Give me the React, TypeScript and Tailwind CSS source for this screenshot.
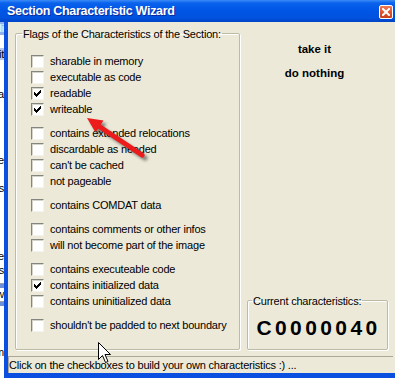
import React from "react";

const groups: { label: string; checked?: boolean }[][] = [
  [
    { label: "sharable in memory" },
    { label: "executable as code" },
    { label: "readable", checked: true },
    { label: "writeable", checked: true },
  ],
  [
    { label: "contains extended relocations" },
    { label: "discardable as needed" },
    { label: "can't be cached" },
    { label: "not pageable" },
  ],
  [{ label: "contains COMDAT data" }],
  [
    { label: "contains comments or other infos" },
    { label: "will not become part of the image" },
  ],
  [
    { label: "contains executeable code" },
    { label: "contains initialized data", checked: true },
    { label: "contains uninitialized data" },
  ],
  [{ label: "shouldn't be padded to next boundary" }],
];

// bits of the window behind the dialog, only the tails show
const behind = [
  { text: "li", cls: "bg-[#8fb0e8] text-white h-[13px]" },
  { text: "", cls: "bg-white h-[13px]" },
  { text: "it", cls: "bg-[#b8c8e8] h-[12px]" },
  { text: "", cls: "bg-white h-[28px]" },
  { text: "a", cls: "bg-white h-[14px]" },
  { text: "", cls: "bg-white h-[52px]" },
  { text: "e", cls: "bg-white h-[14px]" },
  { text: "", cls: "bg-white h-[14px]" },
  { text: "s", cls: "bg-white h-[14px]" },
  { text: "", cls: "bg-white h-[54px]" },
  { text: "e", cls: "bg-white h-[14px]" },
  { text: "is", cls: "bg-white h-[14px]" },
  { text: "", cls: "bg-white h-[6px] border-b border-[#a0a0a0]" },
  { text: "", cls: "bg-[#6d8fd8] h-[4px]" },
  { text: "w", cls: "bg-white h-[14px] border-b border-[#a0a0a0]" },
  { text: "", cls: "bg-[#6d8fd8] h-[4px]" },
  { text: "", cls: "bg-white h-[40px]" },
  { text: "m", cls: "bg-white h-[14px]" },
  { text: "", cls: "bg-white h-[20px]" },
];

function CheckBox({ checked }: { checked?: boolean }) {
  return (
    <span className="mt-[2px] w-[13px] h-[13px] shrink-0 bg-white border border-t-[#85857f] border-l-[#85857f] border-b-[#f4f4ef] border-r-[#f4f4ef] shadow-[inset_1px_1px_0_#d6d4c8] flex items-center justify-center">
      {checked && (
        <svg width="11" height="11" viewBox="0 0 11 11" shapeRendering="crispEdges">
          <path d="M2 4h1v1h1v1h1V5h1V4h1V3h1V2h1v3H8v1H7v1H6v1H5v1H4V8H3V7H2z" fill="#000" />
        </svg>
      )}
    </span>
  );
}

export default function App() {
  return (
    <div className="relative w-[395px] h-[378px] overflow-hidden flex flex-col bg-[#ece9d8] font-['Liberation_Sans',Arial,sans-serif] text-[11px] text-black tracking-[-0.2px]">
      {/* title bar */}
      <div className="h-[22px] shrink-0 flex items-center pl-[7px] pr-[2px] bg-[linear-gradient(180deg,#3b8bf6_0%,#0a62ec_14%,#0056e6_45%,#0052df_80%,#0044c6_100%)]">
        <span className="font-bold text-[12.5px] tracking-[-0.3px] text-white [text-shadow:1px_1px_0_#0a2a9a]">
          Section Characteristic Wizard
        </span>
        <button className="ml-auto mt-[1px] w-[14px] h-[14px] rounded-[2px] border border-white bg-[linear-gradient(180deg,#ec7a58_0%,#e05530_50%,#c8401c_100%)] flex items-center justify-center">
          <svg width="8" height="8" viewBox="0 0 8 8">
            <path d="M1 1L7 7M7 1L1 7" stroke="#fff" strokeWidth="2" strokeLinecap="square" />
          </svg>
        </button>
      </div>

      <div className="flex flex-1 min-h-0">
        {/* window behind */}
        <div className="w-[4px] shrink-0 overflow-hidden bg-white">
          {behind.map((b, i) => (
            <div key={i} className={`flex justify-end whitespace-nowrap leading-[13px] ${b.cls}`}>
              {b.text}
            </div>
          ))}
        </div>

        {/* dialog body */}
        <div className="flex-1 flex flex-col border-l-[4px] border-b-[5px] border-[#0b4fe0]">
          <div className="flex-1 flex min-h-0">
            <fieldset className="mt-[3px] ml-[7px] w-[225px] h-[325px] shrink-0 border border-[#bdbaa8] rounded-[2px] shadow-[inset_1px_1px_0_#fff,1px_1px_0_#fff] pl-[6px]">
              <legend className="px-[1px] pt-[3px] leading-[13px]">
                Flags of the Characteristics of the Section:
              </legend>
              <div className="pl-[9px] pt-[12px] flex flex-col gap-[8px]">
                {groups.map((g, gi) => (
                  <div key={gi} className="flex flex-col">
                    {g.map((item) => (
                      <label key={item.label} className="h-[16px] flex items-start gap-[6px] leading-[16px]">
                        <CheckBox checked={item.checked} />
                        <span>{item.label}</span>
                      </label>
                    ))}
                  </div>
                ))}
              </div>
            </fieldset>

            <div className="flex-1 flex flex-col">
              <div className="pt-[15px] pr-[6px] flex flex-col items-center">
                <button className="h-[24px] px-2 font-bold text-[11.5px] tracking-[0px] leading-[24px]">take it</button>
                <button className="h-[24px] px-2 font-bold text-[11.5px] tracking-[0px] leading-[24px]">do nothing</button>
              </div>

              <fieldset className="mt-auto mb-[6px] ml-[7px] w-[141px] h-[58px] border border-[#bdbaa8] rounded-[2px] shadow-[inset_1px_1px_0_#fff,1px_1px_0_#fff] pl-[4px]">
                <legend className="px-[1px] pt-[3px] leading-[13px]">Current characteristics:</legend>
                <div className="pt-[8px] pr-[2px] text-center font-bold text-[21px] leading-[24px] tracking-[3.4px]">
                  C0000040
                </div>
              </fieldset>
            </div>
          </div>

          {/* status bar */}
          <div className="h-[17px] shrink-0 mr-[2px] border-t border-l border-[#aca899] leading-[16px] whitespace-nowrap overflow-hidden">
            Click on the checkboxes to build your own characteristics :) ...
          </div>
        </div>
      </div>

      {/* red arrow drawn over the screenshot */}
      <svg className="absolute left-0 top-0 pointer-events-none" width="395" height="378" viewBox="0 0 395 378">
        <defs>
          <filter id="blur" x="-20%" y="-20%" width="140%" height="140%">
            <feGaussianBlur stdDeviation="1.6" />
          </filter>
        </defs>
        <g transform="translate(3 3)" opacity="0.45" filter="url(#blur)">
          <path d="M142 155L97 125" stroke="#000" strokeWidth="5" strokeLinecap="round" />
          <path d="M87 118L103.5 120.5L95.5 132.5Z" fill="#000" />
        </g>
        <path d="M142 155L97 125" stroke="#ec1c1c" strokeWidth="5" strokeLinecap="round" />
        <path d="M87 118L103.5 120.5L95.5 132.5Z" fill="#ec1c1c" />
      </svg>

      {/* mouse pointer */}
      <svg className="absolute left-[98px] top-[342px] pointer-events-none" width="14" height="22" viewBox="0 0 14 22">
        <path d="M0.5 0.5V17.5L4.5 13.5L7.5 20.5L10 19.5L7 12.5H12.5Z" fill="#fff" stroke="#000" strokeWidth="1" strokeLinejoin="miter" />
      </svg>
    </div>
  );
}
